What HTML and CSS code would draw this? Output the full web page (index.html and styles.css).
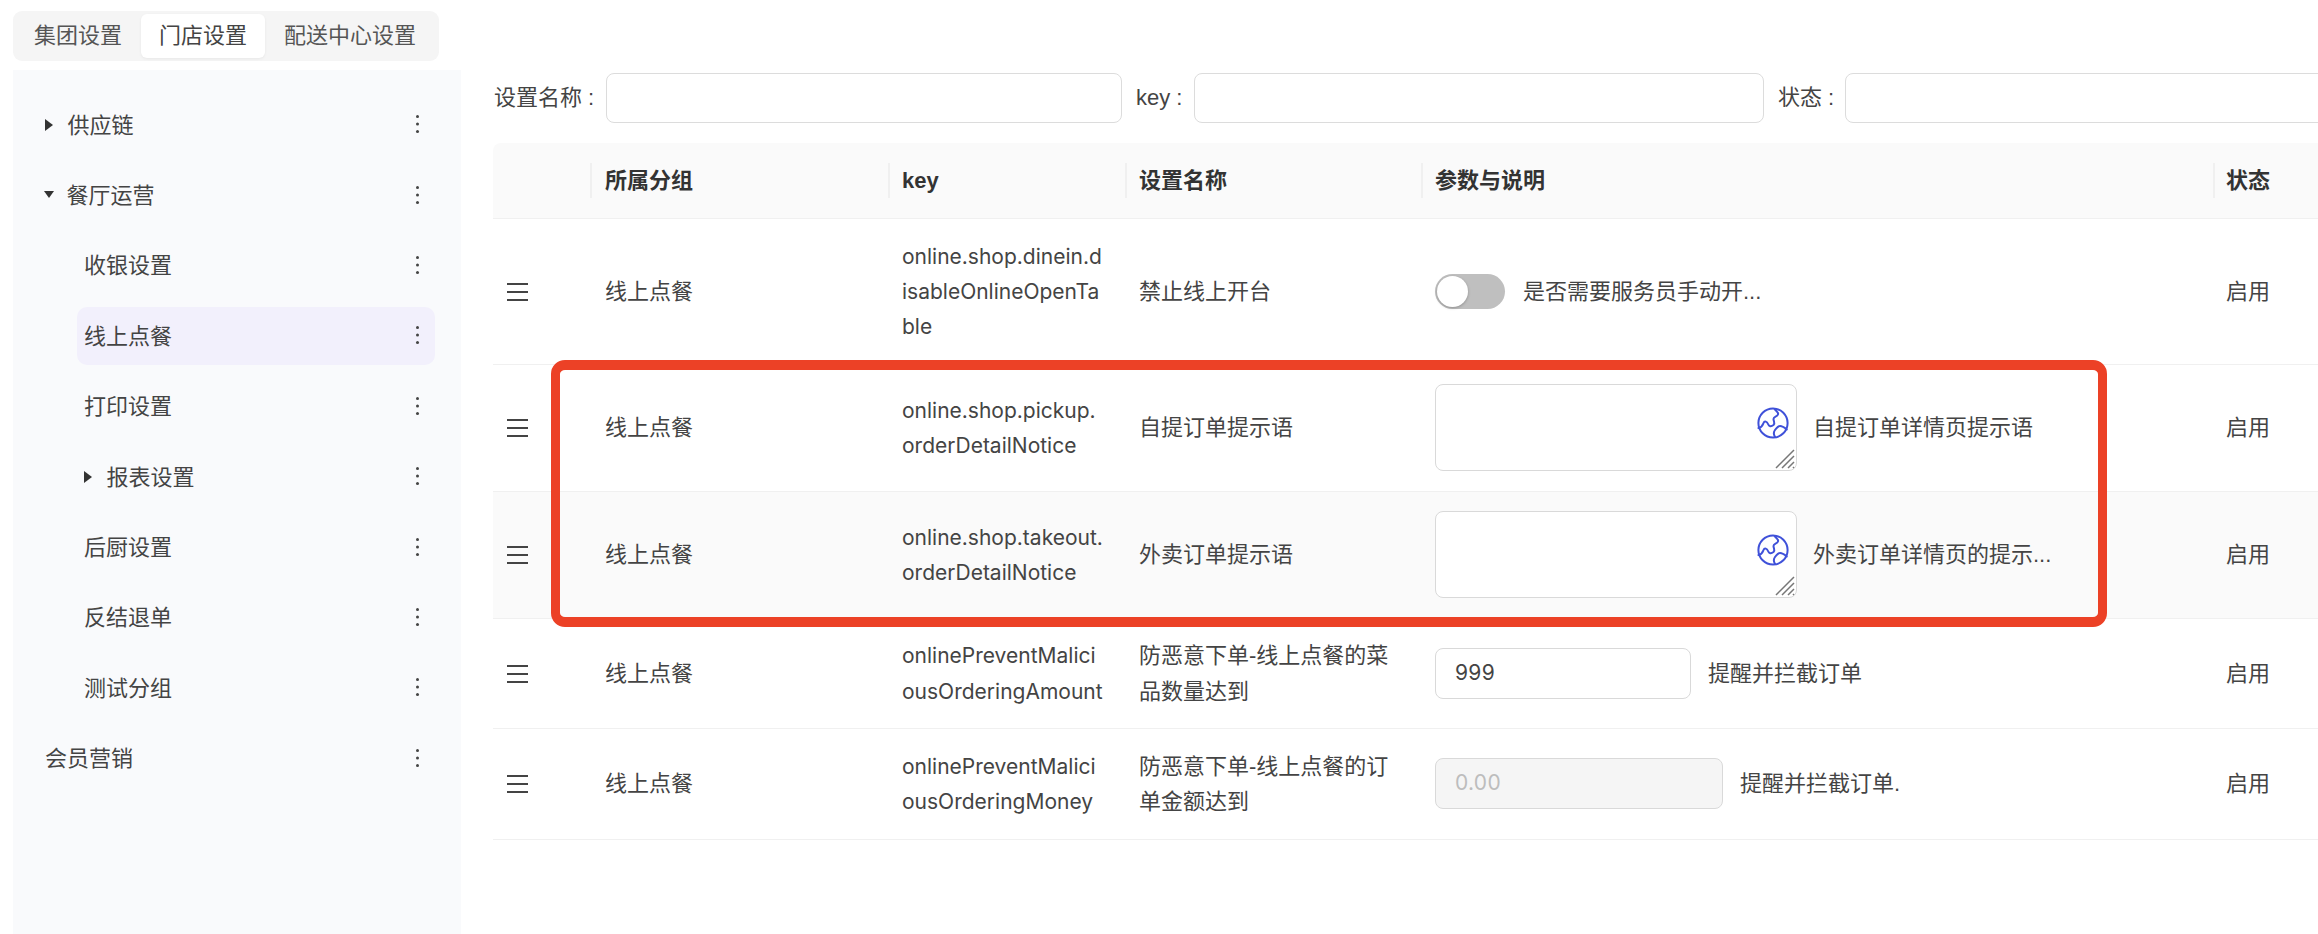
FILE: index.html
```html
<!DOCTYPE html>
<html lang="zh-CN">
<head>
<meta charset="utf-8">
<title>门店设置</title>
<link rel="stylesheet" href="styles.css">
</head>
<body>
<div class="page">
  <aside class="left">
    <div class="tabs">
      <span class="tab">集团设置</span>
      <span class="tab active">门店设置</span>
      <span class="tab">配送中心设置</span>
    </div>
    <nav class="tree">
      <div class="node"><i class="caret right"></i><span class="label">供应链</span><i class="more"></i></div>
      <div class="node"><i class="caret down"></i><span class="label">餐厅运营</span><i class="more"></i></div>
      <div class="node child"><span class="label">收银设置</span><i class="more"></i></div>
      <div class="node child selected"><span class="label">线上点餐</span><i class="more"></i></div>
      <div class="node child"><span class="label">打印设置</span><i class="more"></i></div>
      <div class="node child"><i class="caret right"></i><span class="label">报表设置</span><i class="more"></i></div>
      <div class="node child"><span class="label">后厨设置</span><i class="more"></i></div>
      <div class="node child"><span class="label">反结退单</span><i class="more"></i></div>
      <div class="node child"><span class="label">测试分组</span><i class="more"></i></div>
      <div class="node"><span class="label">会员营销</span><i class="more"></i></div>
    </nav>
  </aside>
  <main class="main">
    <div class="filters">
      <label class="flabel f1">设置名称 :</label><span class="finput w1"></span>
      <label class="flabel f2">key :</label><span class="finput w2"></span>
      <label class="flabel f3">状态 :</label><span class="finput w3"></span>
    </div>
    <div class="table">
      <div class="row head">
        <div class="c c0"></div>
        <div class="c c1">所属分组</div>
        <div class="c c2">key</div>
        <div class="c c3">设置名称</div>
        <div class="c c4">参数与说明</div>
        <div class="c c5">状态</div>
      </div>
      <div class="row">
        <div class="c c0"><i class="drag"></i></div>
        <div class="c c1">线上点餐</div>
        <div class="c c2 keytext">online.shop.dinein.d<br>isableOnlineOpenTa<br>ble</div>
        <div class="c c3">禁止线上开台</div>
        <div class="c c4"><span class="switch"><i class="knob"></i></span><span class="desc d-switch">是否需要服务员手动开...</span></div>
        <div class="c c5">启用</div>
      </div>
      <div class="row">
        <div class="c c0"><i class="drag"></i></div>
        <div class="c c1">线上点餐</div>
        <div class="c c2 keytext">online.shop.pickup.<br>orderDetailNotice</div>
        <div class="c c3">自提订单提示语</div>
        <div class="c c4">
          <span class="area">
            <svg class="globe" viewBox="0 0 32 32" fill="none"><circle cx="16" cy="16" r="14.6"/><path d="M17.700 2C19 4.500 22 5 21 7.500 20 10 16.500 9.500 16.500 12 16.500 14.500 18.500 16 16.500 18 14 20 12 19.500 11 17 10 14.500 7.500 13.500 6.500 16 5.500 18.500 5 20.500 1.500 21"/><path d="M18 30C16.500 27.500 16.500 25 18 23 19.500 21 21 19 23 19 25.500 19 28 21 29.700 22.500"/></svg>
            <svg class="grip" viewBox="0 0 20 20"><path d="M1 19 19 1M7 19 19 7M13 19 19 13M18 19 19 18"/></svg>
          </span>
          <span class="desc d-area">自提订单详情页提示语</span>
        </div>
        <div class="c c5">启用</div>
      </div>
      <div class="row hover">
        <div class="c c0"><i class="drag"></i></div>
        <div class="c c1">线上点餐</div>
        <div class="c c2 keytext">online.shop.takeout.<br>orderDetailNotice</div>
        <div class="c c3">外卖订单提示语</div>
        <div class="c c4">
          <span class="area">
            <svg class="globe" viewBox="0 0 32 32" fill="none"><circle cx="16" cy="16" r="14.6"/><path d="M17.700 2C19 4.500 22 5 21 7.500 20 10 16.500 9.500 16.500 12 16.500 14.500 18.500 16 16.500 18 14 20 12 19.500 11 17 10 14.500 7.500 13.500 6.500 16 5.500 18.500 5 20.500 1.500 21"/><path d="M18 30C16.500 27.500 16.500 25 18 23 19.500 21 21 19 23 19 25.500 19 28 21 29.700 22.500"/></svg>
            <svg class="grip" viewBox="0 0 20 20"><path d="M1 19 19 1M7 19 19 7M13 19 19 13M18 19 19 18"/></svg>
          </span>
          <span class="desc d-area">外卖订单详情页的提示...</span>
        </div>
        <div class="c c5">启用</div>
      </div>
      <div class="row">
        <div class="c c0"><i class="drag"></i></div>
        <div class="c c1">线上点餐</div>
        <div class="c c2 keytext">onlinePreventMalici<br>ousOrderingAmount</div>
        <div class="c c3">防恶意下单-线上点餐的菜<br>品数量达到</div>
        <div class="c c4"><span class="num">999</span><span class="desc d-num">提醒并拦截订单</span></div>
        <div class="c c5">启用</div>
      </div>
      <div class="row">
        <div class="c c0"><i class="drag"></i></div>
        <div class="c c1">线上点餐</div>
        <div class="c c2 keytext">onlinePreventMalici<br>ousOrderingMoney</div>
        <div class="c c3">防恶意下单-线上点餐的订<br>单金额达到</div>
        <div class="c c4"><span class="num off">0.00</span><span class="desc d-num">提醒并拦截订单.</span></div>
        <div class="c c5">启用</div>
      </div>
    </div>
  </main>
</div>
<div class="callout"></div>
</body>
</html>
```
FILE: styles.css
```css
* { box-sizing: border-box; }
html, body { margin: 0; height: 100%; overflow: hidden; background: #fff; }
body {
  font-family: "Liberation Sans", "Noto Sans CJK SC", sans-serif;
  font-size: 22px;
  line-height: 35.2px;
  color: #444;
}
.page { display: flex; height: 934px; width: 2318px; }
.left { width: 493px; padding: 11px 0 0 13px; flex: none; display: flex; flex-direction: column; }
.tabs {
  width: 426px; height: 50px; background: #f5f5f5; border-radius: 9px;
  display: flex; align-items: center; padding: 0 3px;
  gap: 1px; flex: none;
}
.tab { padding: 0 18px; height: 44px; line-height: 44px; color: #555; white-space: nowrap; flex: none; }
.tab.active { background: #fff; border-radius: 6px; box-shadow: 0 1px 3px rgba(0,0,0,.06); color: #444; }
.tree { width: 448px; flex: 1; margin-top: 9px; background: #f9fafc; padding: 20px 0 0 0; }
.node { height: 70.4px; display: flex; align-items: center; position: relative; padding-left: 32px; }
.node .more {
  position: absolute; left: 403px; top: 50%; margin-top: -10px; width: 3px; height: 3px; border-radius: 50%;
  background: #444; box-shadow: 0 7.500px 0 #444, 0 15px 0 #444;
}
.caret { width: 0; height: 0; display: block; flex: none; }
.caret.right { border-left: 8px solid #333; border-top: 6px solid transparent; border-bottom: 6px solid transparent; margin-right: 14.500px; }
.caret.down { border-top: 7px solid #333; border-left: 5.500px solid transparent; border-right: 5.500px solid transparent; margin: -3px 12.500px 0 -1px; }
.child { padding-left: 71px; }
.child.selected::before {
  content: ""; position: absolute; left: 64px; right: 26px; top: 6px; bottom: 7px;
  background: #f2f0fc; border-radius: 10px;
}
.child .label { position: relative; }
.child .more { z-index: 1; }
.main { flex: 1; min-width: 0; overflow: hidden; }
.filters { height: 143px; display: flex; align-items: flex-start; padding-top: 73px; }
.flabel { line-height: 50px; white-space: nowrap; flex: none; }
.f1 { width: 113px; padding-left: 1px; }
.f2 { width: 58px; margin-left: 14px; }
.f3 { width: 67px; margin-left: 14px; }
.finput { display: block; height: 50px; background: #fff; border: 1.500px solid #dcdcdc; border-radius: 8px; flex: none; }
.w1 { width: 516px; }
.w2 { width: 570px; }
.w3 { width: 600px; }
.table { width: 1825px; }
.row { display: grid; grid-template-columns: 97px 298px 237px 296px 792px 105px; border-bottom: 1.500px solid #f0f0f0; }
.row.head { background: #fafafa; font-weight: 700; color: #333; border-top-left-radius: 8px; position: relative; }
.row.hover { background: #fafafa; }
.c { padding: 19.500px 14px; display: flex; align-items: center; position: relative; }
.head .c { padding-top: 20px; padding-bottom: 20px; }
.c1 { padding-left: 15px; }
.c2 { display: block; align-self: center; white-space: nowrap; padding-right: 0; }
.c3 { display: block; align-self: center; white-space: nowrap; padding-right: 0; }
.c5 { padding-left: 13px; white-space: nowrap; }
.keytext { font-family: "Inter", sans-serif; font-size: 21px; }
.head .c1::before, .head .c2::before, .head .c3::before, .head .c4::before, .head .c5::before {
  content: ""; position: absolute; left: 0; top: 20px; bottom: 20px; width: 1.500px; background: #f0f0f0;
}
.drag { display: block; width: 21px; height: 18px; border-top: 2px solid #444; border-bottom: 2px solid #444; position: relative; }
.drag::after { content: ""; position: absolute; left: 0; right: 0; top: 6px; height: 2px; background: #444; }
.switch { display: block; width: 70px; height: 35px; border-radius: 18px; background: #bfbfbf; position: relative; flex: none; }
.knob { position: absolute; left: 2px; top: 2px; width: 31px; height: 31px; border-radius: 50%; background: #fff; box-shadow: 0 1px 3px rgba(0,0,0,.25); }
.desc { white-space: nowrap; }
.d-switch { margin-left: 18px; }
.area { display: block; width: 362px; height: 87px; background: #fff; border: 1.500px solid #d9d9d9; border-radius: 8px; position: relative; flex: none; }
.globe { position: absolute; right: 7px; top: 22px; width: 32px; height: 32px; }
.globe circle, .globe path { stroke: #3f51d9; stroke-width: 2; stroke-linecap: round; stroke-linejoin: round; }
.grip { position: absolute; right: 1px; bottom: 1px; width: 20px; height: 20px; }
.grip path { stroke: #777; stroke-width: 1.500; fill: none; }
.d-area { margin-left: 16px; }
.num { display: block; width: 256px; height: 51px; line-height: 48px; padding-left: 19px; background: #fff; border: 1.500px solid #d9d9d9; border-radius: 8px; flex: none; font-family: "Inter", sans-serif; font-size: 21px; letter-spacing: .3px; }
.num.off { width: 288px; background: #f5f5f5; color: #bdbdbd; }
.d-num { margin-left: 17px; }
.callout { position: absolute; left: 551px; top: 360px; width: 1556px; height: 267px; border-style: solid; border-color: #ec4126; border-width: 10px 9px; border-radius: 14px; pointer-events: none; }
```
